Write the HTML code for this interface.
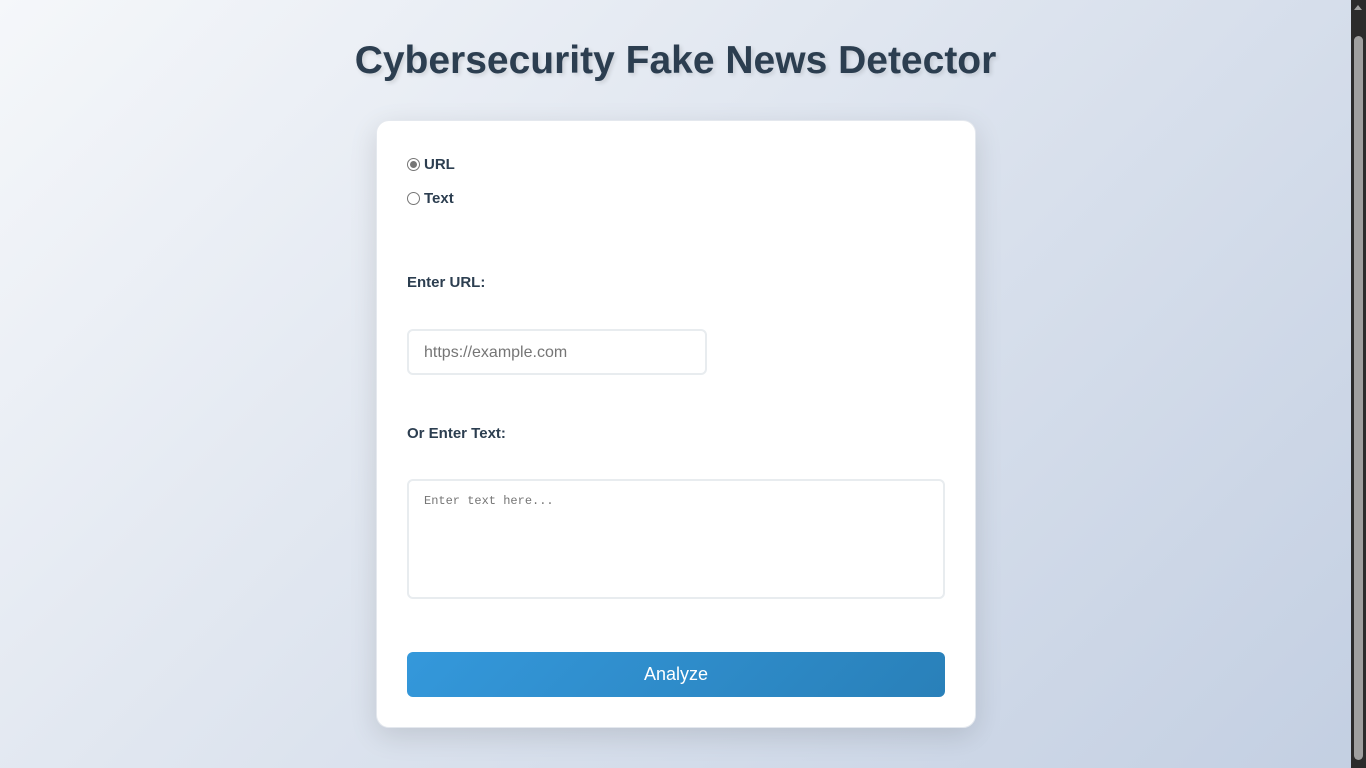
<!DOCTYPE html>
<html><head><style>
html,body{margin:0;padding:0;overflow:hidden}
body{width:1366px;height:768px;background:linear-gradient(135deg,#f5f7fa 0%,#c3cfe2 100%);font-family:"Liberation Sans",sans-serif;color:#2c3e50;position:relative}
h1{position:absolute;left:0;width:1351px;top:38px;margin:0;text-align:center;font-size:39px;font-weight:bold;text-shadow:2px 2px 4px rgba(0,0,0,0.12);line-height:46px}
.card{position:absolute;left:376px;top:120px;width:598px;height:606px;background:#fff;border-radius:13px;box-shadow:0 8px 28px rgba(0,0,0,0.12);border:1px solid #e4e8ee}
.r{position:absolute;left:30px;font-size:15px;font-weight:bold;display:flex;align-items:center}
.r i{display:inline-block;width:13px;height:13px;border:1px solid #767676;border-radius:50%;margin-right:4px;box-sizing:border-box;position:relative}
.r i.on::after{content:"";position:absolute;left:2px;top:2px;width:7px;height:7px;border-radius:50%;background:#767676}
.lbl{position:absolute;left:30px;font-size:15px;font-weight:bold}
.in{position:absolute;left:30px;top:208px;width:300px;height:46px;border:2px solid #e8ecef;border-radius:6px;box-sizing:border-box;font-size:16px;color:#757575;padding:13px 15px;line-height:17px}
.ta{position:absolute;left:30px;top:358px;width:538px;height:120px;border:2px solid #e8ecef;border-radius:6px;box-sizing:border-box;font-family:"Liberation Mono",monospace;font-size:12px;color:#757575;padding:13px 15px}
.btn{position:absolute;left:30px;top:531px;width:538px;height:45px;border-radius:6px;background:linear-gradient(135deg,#3498db,#2980b9);color:#fff;font-size:18px;text-align:center;line-height:45px}
.sb{position:absolute;right:0;top:0;width:15px;height:768px;background:#2b2b2b}
.th{position:absolute;left:3px;top:36px;width:9px;height:724px;background:#9f9f9f;border-radius:5px}
</style></head><body>
<h1>Cybersecurity Fake News Detector</h1>
<div class="card">
<div class="r" style="top:35px"><i class="on"></i>URL</div>
<div class="r" style="top:69px"><i></i>Text</div>
<div class="lbl" style="top:153px">Enter URL:</div>
<div class="in">https://example.com</div>
<div class="lbl" style="top:304px">Or Enter Text:</div>
<div class="ta">Enter text here...</div>
<div class="btn">Analyze</div>
</div>
<div class="sb"><div class="th"></div>
<div style="position:absolute;left:3px;top:5px;border:4px solid transparent;border-bottom:5px solid #9f9f9f;border-top:0"></div>
<div style="position:absolute;left:3px;top:754px;border:4px solid transparent;border-top:5px solid #9f9f9f;border-bottom:0"></div>
</div>
</body></html>
